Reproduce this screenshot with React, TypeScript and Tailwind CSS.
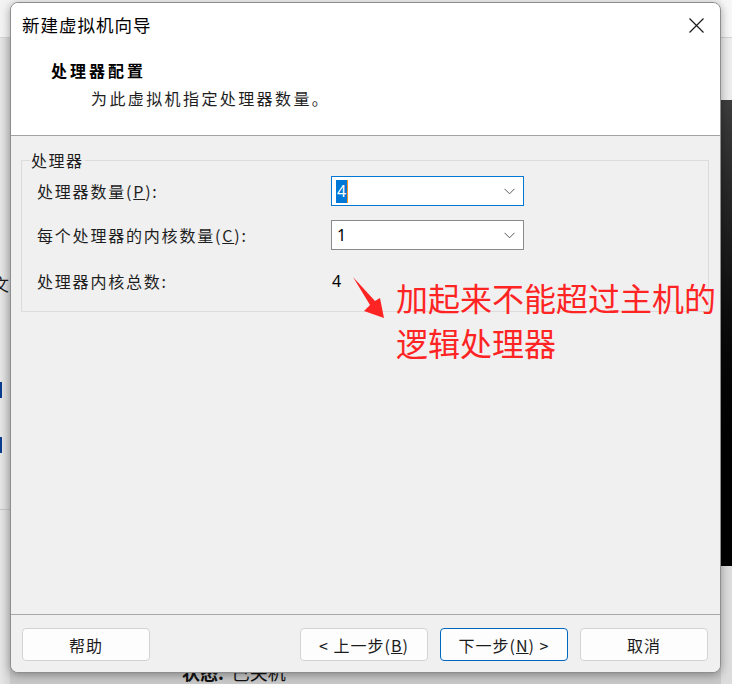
import React from "react";

function Chevron() {
  return (
    <svg width="11" height="7" viewBox="0 0 11 7" className="shrink-0">
      <path d="M0.5 0.8 L5.5 5.8 L10.5 0.8" fill="none" stroke="#5a5a5a" strokeWidth="1" />
    </svg>
  );
}

function Btn({ children, primary }: { children: React.ReactNode; primary?: boolean }) {
  return (
    <div
      className={
        "flex h-[33px] w-[128px] items-center justify-center rounded-[4px] border bg-[#fdfdfd] text-[16px] tracking-[1px] text-[#1b1b1b] " +
        (primary ? "border-[#0067c0]" : "border-[#d3d3d3]")
      }
    >
      {children}
    </div>
  );
}

export default function App() {
  return (
    <div className="relative h-[684px] w-[732px] overflow-hidden bg-[#e4e4e4] font-['Noto_Sans_CJK_SC','Noto_Sans',sans-serif]">
      {/* background application */}
      <div className="flex h-full w-full">
        <div className="flex w-[10px] flex-col bg-gradient-to-r from-[#e6e6e6] to-[#d6d6d6]">
          <div className="h-[38px] border-b border-[#d2d2d2] bg-[#f3f3f3]" />
          <div className="h-[232px]" />
          <div className="-ml-[8px] h-[28px] text-[17px] leading-[28px] text-[#1d1d1d]">文</div>
          <div className="h-[84px]" />
          <div className="h-[16px] w-[2px] bg-[#0a3d8f]" />
          <div className="h-[39px]" />
          <div className="h-[16px] w-[2px] bg-[#0a3d8f]" />
          <div className="h-[56px]" />
          <div className="h-px bg-[#c4c4c4]" />
          <div className="flex-1" />
        </div>
        <div className="flex flex-1 flex-col">
          <div className="h-[38px] border-b border-[#d2d2d2] bg-[#f3f3f3]" />
          <div className="flex-1" />
          <div className="flex h-[18px] items-start bg-[#c9c9c9] pl-[172px] text-[18px] leading-[22px] text-[#111]">
            <span className="-mt-[5px] font-bold">状态:</span>
            <span className="-mt-[5px] ml-[8px]">已关机</span>
          </div>
        </div>
        <div className="flex w-[11px] flex-col">
          <div className="h-[38px] border-b border-[#d2d2d2] bg-[#f7f7f7]" />
          <div className="h-[62px] bg-[#ececec]" />
          <div className="h-[466px] bg-gradient-to-b from-[#3d3d3d] via-[#0a0a0a] to-[#000]" />
          <div className="flex-1 bg-[#dcdcdc]" />
        </div>
      </div>

      {/* dialog window */}
      <div className="absolute left-[10px] top-[2px] flex h-[671px] w-[711px] flex-col overflow-hidden rounded-[8px] border border-[#8e8e8e] bg-[#f0f0f0] shadow-[0_2px_10px_rgba(0,0,0,0.35)]">
        {/* title bar */}
        <div className="flex h-[44px] items-center bg-white pl-[11px]">
          <div className="flex-1 text-[17.5px] tracking-[1px] text-[#000]">新建虚拟机向导</div>
          <div className="flex h-full w-[48px] items-center justify-center">
            <svg width="15" height="15" viewBox="0 0 15 15">
              <path d="M0.5 0.5 L14.5 14.5 M14.5 0.5 L0.5 14.5" stroke="#1a1a1a" strokeWidth="1.2" />
            </svg>
          </div>
        </div>
        {/* header */}
        <div className="h-[88px] bg-white pl-[40px] pt-[11px]">
          <div className="text-[16px] font-bold leading-[24px] tracking-[3px] text-[#000]">处理器配置</div>
          <div className="mt-[4px] pl-[40px] text-[16px] leading-[24px] tracking-[2.4px] text-[#1e1e1e]">
            为此虚拟机指定处理器数量。
          </div>
        </div>
        <div className="h-px bg-[#a3a3a3]" />
        {/* body */}
        <div className="flex-1 bg-[#f0f0f0] pt-[14px]">
          <fieldset className="ml-[10px] mr-[11px] border border-[#dcdcdc] p-0">
            <legend className="ml-[8px] px-[1px] text-[16px] leading-[20px] tracking-[1.5px] text-[#1e1e1e]">处理器</legend>
            <div className="grid grid-cols-[294px_193px] pb-[15px] pl-[15px] pt-[6px] text-[16px] tracking-[1.8px] text-[#1e1e1e]">
              <div className="h-[30px] leading-[30px]">
                处理器数量(<span className="underline">P</span>):
              </div>
              <div className="flex h-[30px] items-center border border-[#0078d4] bg-white pl-[4px] pr-[8px]">
                <span className="flex h-[23px] items-center border-r-[1.5px] border-[#f7931e] bg-[#0078d7] px-[1px] font-['Noto_Sans',sans-serif] text-[16px] tracking-normal text-white">
                  4
                </span>
                <div className="flex-1" />
                <Chevron />
              </div>
              <div className="mt-[14px] h-[30px] leading-[30px]">
                每个处理器的内核数量(<span className="underline">C</span>):
              </div>
              <div className="mt-[14px] flex h-[30px] items-center border border-[#8a8a8a] bg-white pl-[5px] pr-[8px]">
                <span className="font-['Noto_Sans',sans-serif] text-[16px] tracking-normal text-[#000]">1</span>
                <div className="flex-1" />
                <Chevron />
              </div>
              <div className="mt-[16px] h-[30px] leading-[30px]">处理器内核总数:</div>
              <div className="mt-[16px] h-[30px] pl-[1px] font-['Noto_Sans',sans-serif] text-[16px] leading-[30px] tracking-normal text-[#000]">
                4
              </div>
            </div>
          </fieldset>
        </div>
        <div className="h-px bg-[#a8a8a8]" />
        {/* footer */}
        <div className="flex h-[57px] items-start bg-[#f0f0f0] pl-[11px] pr-[12px] pt-[13px]">
          <Btn>帮助</Btn>
          <div className="ml-auto flex gap-[12px]">
            <Btn>
              &lt; 上一步(<span className="underline">B</span>)
            </Btn>
            <Btn primary>
              下一步(<span className="underline">N</span>) &gt;
            </Btn>
            <Btn>取消</Btn>
          </div>
        </div>
      </div>

      {/* red annotation */}
      <div className="absolute left-[396px] top-[275px] text-[32px] leading-[45px] text-[#ff2424]">
        <div>加起来不能超过主机的</div>
        <div>逻辑处理器</div>
      </div>
      <svg className="pointer-events-none absolute left-0 top-0" width="732" height="684" viewBox="0 0 732 684">
        <polygon points="353,277 375,301 380,298 384,318 364,311 370,305" fill="#ff2424" />
      </svg>
    </div>
  );
}
